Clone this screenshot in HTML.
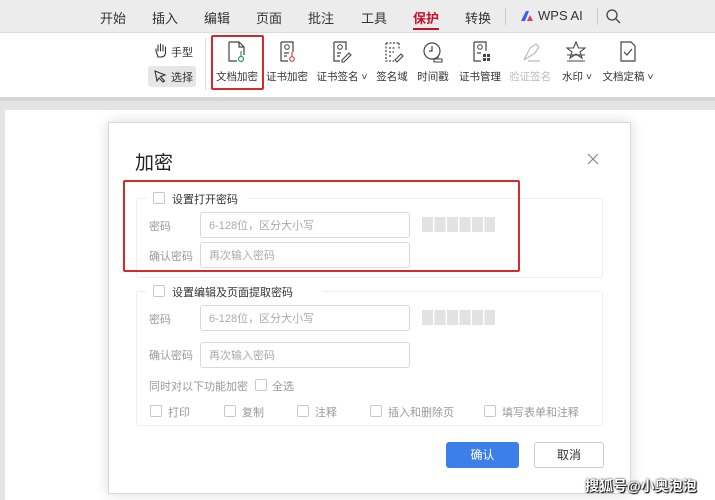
<!DOCTYPE html>
<html><head><meta charset="utf-8"><style>
*{margin:0;padding:0;box-sizing:border-box}
body{width:715px;height:500px;overflow:hidden;position:relative;background:#e4e4e4;font-family:"Liberation Sans","Noto Sans CJK SC",sans-serif;color:#333}
.abs{position:absolute}
.tabs{left:0;top:0;width:715px;height:33px;background:#ececec;border-bottom:1px solid #dcdcdc}
.tab{position:absolute;top:8px;font-size:13px;color:#333}
.tb{left:0;top:33px;width:715px;height:64px;background:#fff}
.lbl{position:absolute;top:69px;font-size:10.5px;color:#333;white-space:nowrap;transform:translateX(-50%)}
.ic{position:absolute;top:40px}
.page{left:5px;top:110px;width:710px;height:390px;background:#fff}
.dlg{left:108px;top:122px;width:523px;height:372px;background:#fff;border:1px solid #d8d8d8;box-shadow:0 0 12px rgba(0,0,0,.15)}
.sec{position:absolute;border:1px solid #eee;border-radius:3px}
.cb{position:absolute;width:12px;height:12px;border:1px solid #c8c8c8;border-radius:2px;background:#fff}
.t{position:absolute;font-size:11px;color:#999;white-space:nowrap}
.inp{position:absolute;border:1px solid #d9d9d9;border-radius:3px;height:26px;width:210px;font-size:11px;color:#aaa;padding:4px 0 0 8px}
.str{position:absolute;width:73px;height:15px;background:repeating-linear-gradient(90deg,#e2e2e2 0 11px,#fff 11px 12.5px)}
</style></head><body>
<div class="abs tabs">
<span class="tab" style="left:100px">开始</span>
<span class="tab" style="left:152px">插入</span>
<span class="tab" style="left:204px">编辑</span>
<span class="tab" style="left:256px">页面</span>
<span class="tab" style="left:308px">批注</span>
<span class="tab" style="left:361px">工具</span>
<span class="tab" style="left:413px;color:#c8102e;font-weight:bold">保护</span>
<div class="abs" style="left:413px;top:28px;width:26px;height:2px;background:#c8102e"></div>
<span class="tab" style="left:465px">转换</span>
<div class="abs" style="left:505px;top:8px;width:1px;height:17px;background:#ccc"></div>
<svg class="abs" style="left:520px;top:10px" width="14" height="12"><path d="M1 11 L6 1 L9 1 L5 11Z" fill="#3b5bff"/><path d="M7 11 L10 5 L13 11Z" fill="#e8346b"/></svg>
<span class="tab" style="left:538px">WPS AI</span>
<div class="abs" style="left:597px;top:8px;width:1px;height:17px;background:#ccc"></div>
<svg class="abs" style="left:606px;top:9px" width="15" height="15"><circle cx="6" cy="6" r="5" fill="none" stroke="#444" stroke-width="1.3"/><path d="M9.7 9.7L14 14" stroke="#444" stroke-width="1.3"/></svg>
</div>
<div class="abs tb">
<svg class="abs" style="left:154px;top:10px" width="14" height="15"><path d="M4 14 L2 8 V6 M4 8 V2 M6.5 8 V1 M9 8 V2 M11.5 9 V4 M11.5 9 Q11.5 14 7 14 H4" fill="none" stroke="#333" stroke-width="1.1" stroke-linecap="round"/></svg>
<span class="abs" style="left:171px;top:11px;font-size:11px">手型</span>
<div class="abs" style="left:148px;top:33px;width:48px;height:21px;background:#e6e6e6;border-radius:3px"></div>
<svg class="abs" style="left:153px;top:36px" width="14" height="14"><path d="M2 2 L12 6 L7.5 7.5 L11.5 12 L10 13 L6 9 L4 12Z" fill="none" stroke="#333" stroke-width="1.1"/></svg>
<span class="abs" style="left:171px;top:36px;font-size:11px">选择</span>
<div class="abs" style="left:205px;top:5px;width:1px;height:52px;background:#ddd"></div>
<div class="abs" style="left:211px;top:2px;width:53px;height:55px;border:2.5px solid #d42a2a;border-radius:2px"></div>
</div>
<svg class="ic" style="left:226px" width="22" height="24"><path d="M3 2 H13 L18 7 V15 M13 2 V7 H18 M3 2 V21 H11" fill="none" stroke="#444" stroke-width="1.2"/><circle cx="15" cy="19" r="2.5" fill="none" stroke="#2a9d5c" stroke-width="1.2"/><path d="M15 16.5 V11" stroke="#2a9d5c" stroke-width="1.2"/></svg>
<svg class="ic" style="left:277px" width="22" height="24"><path d="M4 2 H16 V12 M4 2 V21 H11 M7 13 H12 M7 16 H10" fill="none" stroke="#444" stroke-width="1.2"/><circle cx="10" cy="7" r="2.3" fill="none" stroke="#444"/><circle cx="15" cy="19" r="2.3" fill="none" stroke="#d44" stroke-width="1.2"/><path d="M15 16.5 V12" stroke="#d44" stroke-width="1.2"/></svg>
<svg class="ic" style="left:330px" width="22" height="24"><path d="M4 2 H16 V10 M4 2 V21 H10 M7 13 H11 M7 16 H10" fill="none" stroke="#444" stroke-width="1.2"/><circle cx="10" cy="7" r="2.3" fill="none" stroke="#444"/><path d="M12 20 L19 13 L21 15 L14 22 H12Z" fill="none" stroke="#444" stroke-width="1.1"/></svg>
<svg class="ic" style="left:382px" width="22" height="24"><path d="M4 3 H17 M4 3 V21 H12 M17 3 V10 M7 8 H14 M7 12 H12 M7 16 H10" fill="none" stroke="#444" stroke-width="1.2" stroke-dasharray="2 1.5"/><path d="M13 20 L19 14 L21 16 L15 22Z" fill="none" stroke="#444" stroke-width="1.1"/></svg>
<svg class="ic" style="left:422px" width="22" height="24"><circle cx="10" cy="11" r="8" fill="none" stroke="#444" stroke-width="1.2"/><path d="M10 6 V11 H7" fill="none" stroke="#444" stroke-width="1.2"/><path d="M12 22 H20 V19 H12Z M16 19 V16" fill="#fff" stroke="#444" stroke-width="1.1"/></svg>
<svg class="ic" style="left:470px" width="22" height="24"><path d="M4 2 H16 V11 M4 2 V21 H11 M7 13 H11" fill="none" stroke="#444" stroke-width="1.2"/><circle cx="10" cy="7" r="2.3" fill="none" stroke="#444"/><path d="M13 14 h3 v3 h-3z M17 14 h3 v3 h-3z M13 18 h3 v3 h-3z M17 18 h3 v3 h-3z" fill="#444"/></svg>
<svg class="ic" style="left:520px" width="22" height="24"><path d="M4 20 L10 8 L16 4 L19 7 L15 13 L4 20 M8 21 H20" fill="none" stroke="#bbb" stroke-width="1.2"/></svg>
<svg class="ic" style="left:565px" width="22" height="24"><path d="M11 2 L13.5 8 H20 L15 12 L17 18 L11 14 L5 18 L7 12 L2 8 H8.5Z" fill="none" stroke="#444" stroke-width="1.1"/><path d="M2 15 H20 M2 21 H20" stroke="#444" stroke-width="1.1"/></svg>
<svg class="ic" style="left:617px" width="22" height="24"><path d="M4 2 H14 L18 6 V21 H4Z" fill="none" stroke="#444" stroke-width="1.2"/><path d="M7 12 L10 15 L15 9" fill="none" stroke="#444" stroke-width="1.2"/></svg>
<span class="lbl" style="left:237px">文档加密</span>
<span class="lbl" style="left:287px">证书加密</span>
<span class="lbl" style="left:342px">证书签名 ˅</span>
<span class="lbl" style="left:392px">签名域</span>
<span class="lbl" style="left:433px">时间戳</span>
<span class="lbl" style="left:480px">证书管理</span>
<span class="lbl" style="left:530px;color:#bbb">验证签名</span>
<span class="lbl" style="left:577px">水印 ˅</span>
<span class="lbl" style="left:628px">文档定稿 ˅</span>
<div class="abs" style="left:0;top:97px;width:715px;height:4px;background:#d6d6d6"></div>
<div class="abs page"></div>
<div class="abs dlg">
<span class="abs" style="left:26px;top:25px;font-size:19px;color:#222">加密</span>
<svg class="abs" style="left:478px;top:30px" width="12" height="12"><path d="M1 1L11 11M11 1L1 11" stroke="#888" stroke-width="1.2"/></svg>
<div class="sec" style="left:27px;top:75px;width:467px;height:80px"></div>
<div class="abs" style="left:38px;top:68px;width:100px;height:12px;background:#fff"></div>
<div class="cb" style="left:44px;top:69px"></div>
<span class="abs" style="left:63px;top:68px;font-size:11px;color:#333">设置打开密码</span>
<span class="t" style="left:40px;top:95px">密码</span>
<div class="inp" style="left:91px;top:89px">6-128位，区分大小写</div>
<div class="str" style="left:313px;top:94px"></div>
<span class="t" style="left:40px;top:125px">确认密码</span>
<div class="inp" style="left:91px;top:119px">再次输入密码</div>
<div class="sec" style="left:27px;top:168px;width:467px;height:135px"></div>
<div class="abs" style="left:38px;top:160px;width:175px;height:12px;background:#fff"></div>
<div class="cb" style="left:44px;top:162px"></div>
<span class="abs" style="left:63px;top:161px;font-size:11px;color:#333">设置编辑及页面提取密码</span>
<span class="t" style="left:40px;top:188px">密码</span>
<div class="inp" style="left:91px;top:182px">6-128位，区分大小写</div>
<div class="str" style="left:313px;top:187px"></div>
<span class="t" style="left:40px;top:224px">确认密码</span>
<div class="inp" style="left:91px;top:219px">再次输入密码</div>
<span class="t" style="left:40px;top:255px">同时对以下功能加密</span>
<div class="cb" style="left:146px;top:256px"></div>
<span class="t" style="left:163px;top:255px">全选</span>
<div class="cb" style="left:41px;top:282px"></div><span class="t" style="left:59px;top:281px">打印</span>
<div class="cb" style="left:115px;top:282px"></div><span class="t" style="left:133px;top:281px">复制</span>
<div class="cb" style="left:188px;top:282px"></div><span class="t" style="left:206px;top:281px">注释</span>
<div class="cb" style="left:261px;top:282px"></div><span class="t" style="left:279px;top:281px">插入和删除页</span>
<div class="cb" style="left:375px;top:282px"></div><span class="t" style="left:393px;top:281px">填写表单和注释</span>
<div class="abs" style="left:337px;top:319px;width:73px;height:26px;background:#3d7fe8;border-radius:3px;color:#fff;font-size:12px;text-align:center;line-height:26px">确认</div>
<div class="abs" style="left:425px;top:319px;width:70px;height:26px;border:1px solid #ccc;border-radius:3px;color:#333;font-size:12px;text-align:center;line-height:24px">取消</div>
</div>
<div class="abs" style="left:123px;top:180px;width:397px;height:92px;border:2.5px solid #d42a2a;border-radius:2px"></div>
<span class="abs" style="left:585px;top:476px;font-size:14px;font-weight:bold;color:#fff;text-shadow:0 0 2px #000,1px 1px 1px #000">搜狐号@小奥泡泡</span>
</body></html>
